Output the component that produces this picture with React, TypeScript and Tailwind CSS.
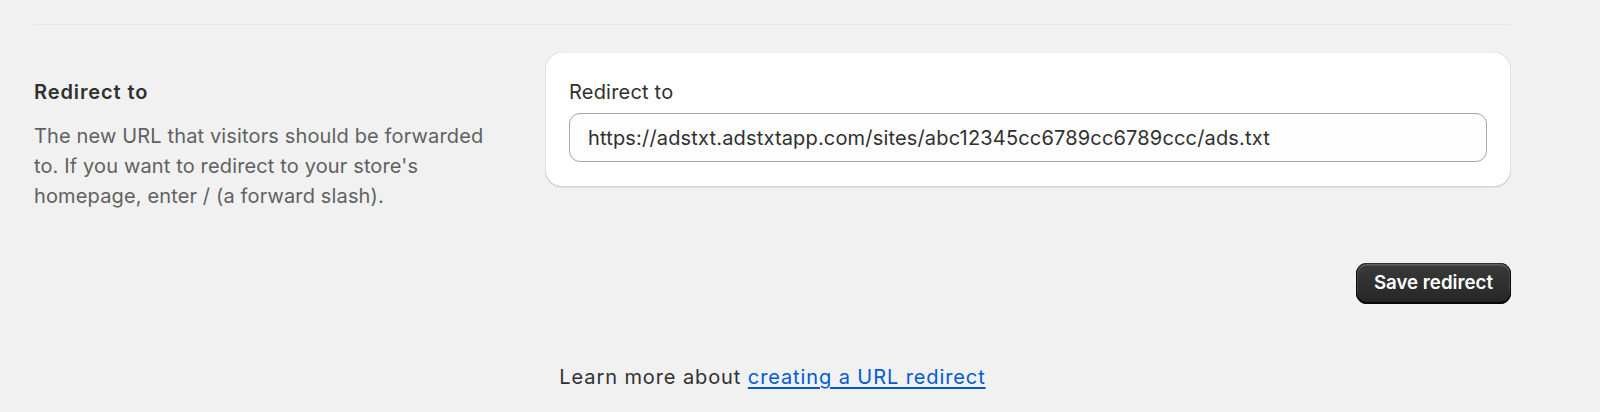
export default function App() {
  return (
    <div className="min-h-[412px] w-full bg-[#f1f1f1] font-['Inter',sans-serif] text-[20px] text-[#303030]">
      <div className="ml-[34px] w-[1477px] pt-[24px]">
        {/* Divider */}
        <div className="h-px bg-[#e6e6e6]" />

        {/* Redirect to section */}
        <div className="mt-[27px] flex items-start">
          <div className="w-[511px] shrink-0 pt-[26px]">
            <h2 className="text-[20px] font-semibold leading-[28px] tracking-[0.9px] text-[#303030]">Redirect to</h2>
            <p className="mt-[15px] w-[470px] text-[20px] leading-[30px] tracking-[0.14px] text-[#616161]">
              The new URL that visitors should be forwarded to. If you want to redirect to your store's homepage,
              enter / (a forward slash).
            </p>
          </div>

          <div className="flex-1 rounded-[17px] bg-white px-[24px] pt-[26px] pb-[25px] shadow-[0_1px_0_0_rgba(26,26,26,0.07),inset_0_1px_0_0_rgba(0,0,0,0.06),inset_0_-1px_0_0_rgba(0,0,0,0.16),inset_-1px_0_0_0_rgba(0,0,0,0.1),inset_1px_0_0_0_rgba(0,0,0,0.1)]">
            <label className="block text-[20px] leading-[28px] tracking-[0.2px] text-[#303030]">Redirect to</label>
            <div className="mt-[7px] flex h-[49px] items-center rounded-[11px] border border-[#a6a6a6] bg-[#fdfdfd] px-[18px]">
              <span className="text-[20px] leading-[28px] tracking-[0.17px] text-[#303030]">
                https://adstxt.adstxtapp.com/sites/abc12345cc6789cc6789ccc/ads.txt
              </span>
            </div>
          </div>
        </div>

        {/* Actions */}
        <div className="mt-[52px] flex justify-end">
          <button className="h-[41px] rounded-[11px] bg-gradient-to-b from-[#3a3a3a] to-[#262626] px-[18px] text-[18.7px] font-semibold text-white shadow-[inset_0_-1px_0_1px_rgba(0,0,0,0.8),inset_0_0_0_1px_#303030,inset_0_1px_0_1.5px_rgba(255,255,255,0.2)]">
            Save redirect
          </button>
        </div>

        {/* Footer help */}
        <div className="mt-[59px] flex justify-center">
          <p className="text-[20px] leading-[28px] tracking-[0.9px] text-[#303030]">
            Learn more about{' '}
            <a href="#" className="text-[#005bd3] underline underline-offset-[3px]">
              creating a URL redirect
            </a>
          </p>
        </div>
      </div>
    </div>
  )
}
